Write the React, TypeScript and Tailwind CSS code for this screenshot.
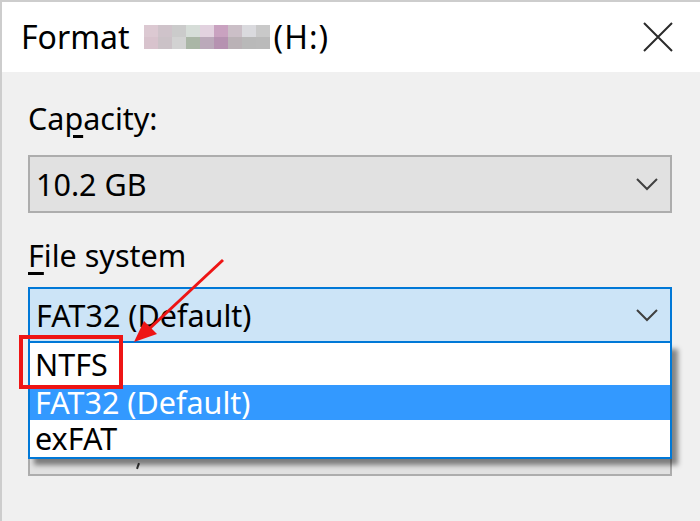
import React from 'react';

const FONT = { fontFamily: '"Noto Sans", "Open Sans", sans-serif' };

const mosaic = [
  ['#dcc9d2', '#cfc3ca', '#cbcbcb', '#d6ddd8', '#e2d2df', '#c9a2c0', '#cbbfc7', '#dadade', '#c9c9c9'],
  ['#d8c3cd', '#cbc2c7', '#d2d2d2', '#aab6a6', '#bba9ba', '#b692b1', '#bab2b6', '#b9b9b9', '#bababa'],
];

function Chevron() {
  return (
    <svg width="22" height="13" viewBox="0 0 22 13" className="shrink-0">
      <polyline points="1,1 11,11 21,1" fill="none" stroke="#404040" strokeWidth="2" />
    </svg>
  );
}

function Combo({ text, active }: { text?: string; active?: boolean }) {
  return (
    <div
      className={
        active
          ? 'flex h-[56px] items-center justify-between border-2 border-[#0078d7] bg-[#cce4f7] pl-[6px] pr-[12px]'
          : 'flex h-[58px] items-center justify-between border-2 border-[#adadad] bg-[#e1e1e1] pl-[6px] pr-[12px]'
      }
    >
      <span className="text-[30.5px] leading-[40px] text-black">{text}</span>
      <Chevron />
    </div>
  );
}

export default function App() {
  return (
    <div
      className="relative h-[521px] w-[700px] overflow-hidden border-l-2 border-t-2 border-[#cdcdcd] bg-[#f0f0f0]"
      style={FONT}
    >
      {/* title bar */}
      <div className="flex h-[70px] items-center justify-between bg-white pl-[19px] pr-[27px]">
        <div className="flex items-center text-[32px] leading-[40px] text-black">
          <span>Format</span>
          <span className="ml-[14px] mr-[4px] flex flex-col">
            {mosaic.map((row, i) => (
              <span key={i} className="flex">
                {row.map((c, j) => (
                  <span key={j} className="block h-[12px] w-[14px]" style={{ background: c }} />
                ))}
              </span>
            ))}
          </span>
          <span className="tracking-[1px]">(H:)</span>
        </div>
        <svg width="30" height="30" viewBox="0 0 30 30">
          <path d="M1 1 L29 29 M29 1 L1 29" stroke="#2b2b2b" strokeWidth="2" />
        </svg>
      </div>

      {/* body */}
      <div className="pl-[26px] pr-[28px] pt-[26px] text-black">
        <div className="text-[30.5px] leading-[40px]">
          Ca<span className="underline underline-offset-[5px]">p</span>acity:
        </div>
        <div className="mt-[17px]">
          <Combo text="10.2 GB" />
        </div>

        <div className="mt-[22px] text-[30.5px] leading-[40px]">
          <span className="underline underline-offset-[5px]">F</span>ile system
        </div>
        <div className="mt-[12px]">
          <Combo text="FAT32 (Default)" active />
        </div>

        {/* allocation unit size row, mostly hidden under the open list */}
        <div className="mt-[75px]">
          <Combo />
        </div>
      </div>

      {/* descender of the hidden combo text peeking below the list */}
      <div className="absolute left-[135px] top-[461px] h-[6px] w-[2px] rotate-[20deg] bg-[#333]" />

      {/* open dropdown list */}
      <div className="absolute left-[26px] top-[341px] w-[644px] border-x-2 border-b-2 border-[#0078d7] bg-white text-[30.5px] shadow-[6px_6px_5px_rgba(0,0,0,0.45)]">
        <div className="h-[42px] pl-[5px] pt-[4px] leading-[35px] text-black">NTFS</div>
        <div className="h-[35px] bg-[#3399ff] pl-[5px] leading-[35px] text-white">FAT32 (Default)</div>
        <div className="h-[37px] pl-[5px] pt-[1px] leading-[35px] text-black">exFAT</div>
      </div>

      {/* annotation */}
      <div className="absolute left-[17px] top-[333px] h-[54px] w-[104px] border-4 border-[#ee1515]" />
      <svg className="absolute left-0 top-0" width="700" height="521" viewBox="0 0 700 521">
        <line x1="221" y1="258" x2="146" y2="328" stroke="#ee1515" strokeWidth="3" />
        <polygon points="132,340 142,319 155,332" fill="#ee1515" />
      </svg>
    </div>
  );
}
